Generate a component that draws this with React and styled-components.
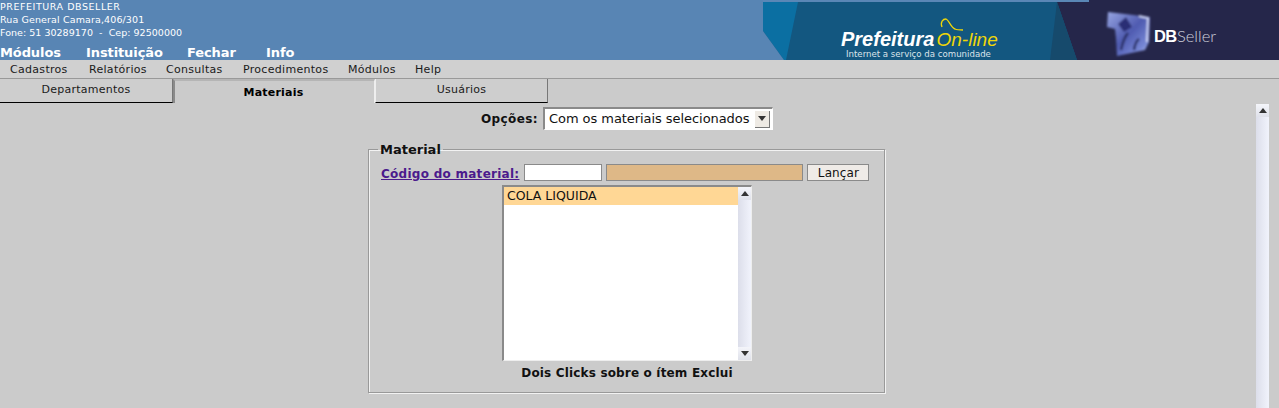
import React from 'react';
import styled, { createGlobalStyle } from 'styled-components';

const menuItems = [
  { label: 'Cadastros', width: 79 },
  { label: 'Relatórios', width: 77 },
  { label: 'Consultas', width: 77 },
  { label: 'Procedimentos', width: 105 },
  { label: 'Módulos', width: 67 },
  { label: 'Help' },
];

export default function App() {
  return (
    <>
      <GlobalStyle />
      <Header>
        <Company>
          <CompanyLines>
            <CompanyLine $spacing={0.55}>PREFEITURA DBSELLER</CompanyLine>
            <CompanyLine $spacing={0.12}>Rua General Camara,406/301</CompanyLine>
            <CompanyLine $spacing={0.03}>Fone: 51 30289170 &nbsp;-&nbsp; Cep: 92500000</CompanyLine>
          </CompanyLines>
          <TopMenu>
            <TopLink $width={86}>Módulos</TopLink>
            <TopLink $width={101}>Instituição</TopLink>
            <TopLink $width={79}>Fechar</TopLink>
            <TopLink>Info</TopLink>
          </TopMenu>
        </Company>
        <Banner />
      </Header>
      <MenuBar>
        {menuItems.map(item => (
          <MenuItem key={item.label} $width={item.width}>
            {item.label}
          </MenuItem>
        ))}
      </MenuBar>
      <Tabs>
        <FirstTab $width={173}>Departamentos</FirstTab>
        <ActiveTab>Materiais</ActiveTab>
        <Tab $width={173}>Usuários</Tab>
      </Tabs>
      <Page>
        <Content>
          <OptionsRow>
            <OptionsLabel>Opções:</OptionsLabel>
            <SelectBox>
              <SelectText>Com os materiais selecionados</SelectText>
              <SelectArrow>
                <Arrow $down />
              </SelectArrow>
            </SelectBox>
          </OptionsRow>
          <Fieldset>
            <Legend>Material</Legend>
            <CodeRow>
              <CodeLink href="#">Código do material:</CodeLink>
              <CodeInput />
              <NameInput />
              <Button>Lançar</Button>
            </CodeRow>
            <ListBox>
              <ListRows>
                <ListItem>COLA LIQUIDA</ListItem>
              </ListRows>
              <ListScroll>
                <ScrollButton>
                  <Arrow />
                </ScrollButton>
                <ScrollTrack />
                <ScrollButton>
                  <Arrow $down />
                </ScrollButton>
              </ListScroll>
            </ListBox>
            <Hint>Dois Clicks sobre o ítem Exclui</Hint>
          </Fieldset>
        </Content>
        <PageScroll>
          <ScrollButton>
            <Arrow />
          </ScrollButton>
          <ScrollTrack />
        </PageScroll>
      </Page>
    </>
  );
}

function Banner() {
  return (
    <BannerSvg viewBox="0 0 516 60" width="516" height="60">
      <defs>
        <linearGradient id="cube" x1="0" y1="0" x2="1" y2="1">
          <stop offset="0" stopColor="#98a6e2" />
          <stop offset="0.5" stopColor="#4f5bb0" />
          <stop offset="0.8" stopColor="#7686d4" />
          <stop offset="1" stopColor="#b4c2ee" />
        </linearGradient>
        <filter id="soft">
          <feGaussianBlur stdDeviation="0.8" />
        </filter>
      </defs>
      <rect width="516" height="60" fill="#135780" />
      <rect width="326" height="2" fill="#5a87b6" />
      <polygon points="0,2 35,2 23,60 21,60 0,31" fill="#0b6fa2" />
      <polygon points="0,31 21,60 0,60" fill="#5885b4" />
      <polygon points="294,2 326,2 326,0 516,0 516,60 314,60" fill="#25264a" />
      <polygon points="294,2 287,60 314,60" fill="#164a6c" />
      <text x="78" y="46" fill="#fff" fontFamily="'Liberation Sans', sans-serif" fontSize="20" fontStyle="italic" fontWeight="700">Prefeitura</text>
      <text x="173.5" y="46" fill="#efd608" fontFamily="'Liberation Sans', sans-serif" fontSize="19" fontStyle="italic">On-line</text>
      <path d="M179 27c-2-5 1-8 4-8 3 1 5 9 9 10 2 1 5 1 8 1" fill="none" stroke="#efd608" strokeWidth="1.3" />
      <text x="83" y="57" fill="#dbe4ea" fontFamily="'DejaVu Sans', sans-serif" fontSize="8.6">Internet a serviço da comunidade</text>
      <g filter="url(#soft)">
        <polygon points="345,12 387,17 386,42 382,50 354,56 353,38 352,29 344,27" fill="url(#cube)" />
        <polygon points="355,24 363,17 369,27 361,32" fill="#2b2f74" />
        <path d="M358 50c2-9 4-14 7-17M371 50c1-6 2-9 5-11" fill="none" stroke="#2c3068" strokeWidth="2.5" />
        <path d="M376 16l9 2-1 24" fill="none" stroke="#cfd6f4" strokeWidth="2" />
      </g>
      <text x="391" y="42" fill="#fff" fontFamily="'Liberation Sans', sans-serif" fontSize="16.5" fontWeight="700" letterSpacing="-0.6">DB</text>
      <text x="414" y="42" fill="#cfd1dc" fontFamily="Lato, sans-serif" fontSize="16.5" fontWeight="300">Seller</text>
    </BannerSvg>
  );
}

const GlobalStyle = createGlobalStyle`
  html, body {
    margin: 0;
    height: 408px;
    overflow: hidden;
    background: #cbcbcb;
    color: #000;
    font-family: 'DejaVu Sans', Verdana, sans-serif;
  }
`;

const Header = styled.header`
  display: flex;
  justify-content: space-between;
  height: 60px;
  background: #5885b4;
  overflow: hidden;
`;

const Company = styled.div`
  display: flex;
  flex-direction: column;
  color: #fff;
`;

const CompanyLines = styled.div`
  font-size: 9.5px;
  line-height: 13px;
  height: 46px;
`;

const CompanyLine = styled.div`
  letter-spacing: ${p => p.$spacing}px;
`;

const TopMenu = styled.nav`
  display: flex;
  font-size: 13px;
  font-weight: 700;
  line-height: 15px;
  letter-spacing: -0.1px;
  padding-top: 1px;
`;

const TopLink = styled.span`
  width: ${p => (p.$width ? `${p.$width}px` : 'auto')};
`;

const BannerSvg = styled.svg`
  display: block;
  flex: none;
`;

const MenuBar = styled.nav`
  display: flex;
  height: 18px;
  padding-left: 10px;
  background: #d0d0d0;
  border-bottom: 1px solid #999;
  font-size: 11px;
  line-height: 19px;
  letter-spacing: 0.3px;
  color: #1a1a1a;
`;

const MenuItem = styled.span`
  width: ${p => (p.$width ? `${p.$width}px` : 'auto')};
`;

const Tabs = styled.div`
  display: flex;
  height: 24px;
`;

const Tab = styled.div`
  box-sizing: border-box;
  width: ${p => p.$width}px;
  height: 24px;
  text-align: center;
  font-size: 11px;
  line-height: 22px;
  letter-spacing: 0.25px;
  background: #cecece;
  color: #1a1a1a;
  border-bottom: 1px solid #000;
  border-right: 1px solid #777;
  border-left: 1px solid #eee;
`;

const FirstTab = styled(Tab)`
  border-left: none;
`;

const ActiveTab = styled.div`
  box-sizing: border-box;
  width: 202px;
  height: 24px;
  padding: 1px 2px 0 0;
  text-align: center;
  font-size: 11px;
  font-weight: 700;
  line-height: 21px;
  letter-spacing: 0.2px;
  background: #cbcbcb;
  border-top: 2px solid #b5b5b5;
  border-left: 2px solid #8a8a8a;
  border-right: 1px solid #eee;
`;

const Page = styled.main`
  display: flex;
  height: 305px;
  overflow: hidden;
`;

const Content = styled.div`
  flex: 1;
  display: flex;
  flex-direction: column;
  align-items: center;
`;

const OptionsRow = styled.div`
  display: flex;
  align-items: center;
  gap: 5px;
  height: 23px;
  margin: 4px 0 19px -2px;
`;

const OptionsLabel = styled.span`
  font-size: 12px;
  font-weight: 700;
  letter-spacing: 0.4px;
  color: #111;
`;

const SelectBox = styled.div`
  box-sizing: border-box;
  display: flex;
  align-items: center;
  justify-content: space-between;
  width: 230px;
  height: 23px;
  padding: 0 2px 0 4px;
  background: #fff;
  border: 1px solid #fff;
  border-top: 2px solid #8a8a8a;
  border-left: 2px solid #8a8a8a;
  font-size: 13px;
  letter-spacing: -0.06px;
  color: #111;
  white-space: nowrap;
`;

const SelectText = styled.span`
  margin-top: -2px;
`;

const SelectArrow = styled.span`
  display: flex;
  align-items: center;
  justify-content: center;
  width: 14px;
  height: 16px;
  background: #eeeae4;
  border-right: 1px solid #777;
  border-bottom: 1px solid #777;
`;

const Arrow = styled.span`
  width: 0;
  height: 0;
  border-left: 4px solid transparent;
  border-right: 4px solid transparent;
  ${p => (p.$down ? 'border-top: 5px solid #333;' : 'border-bottom: 5px solid #333;')}
`;

const Fieldset = styled.fieldset`
  box-sizing: border-box;
  display: flex;
  flex-direction: column;
  align-items: center;
  width: 518px;
  height: 253px;
  margin: -8px 0 0 -2px;
  padding: 0 10px;
  border: 1px solid #f2f2f2;
  border-top-color: #999;
  border-left-color: #999;
  border-radius: 0;
  box-shadow: inset -1px -1px 0 #999, inset 1px 1px 0 #f2f2f2;
`;

const Legend = styled.legend`
  margin-left: -1px;
  padding: 1px 2px 0;
  font-size: 13px;
  font-weight: 700;
  line-height: 15px;
  color: #111;
`;

const CodeRow = styled.div`
  display: flex;
  align-items: center;
  align-self: flex-start;
  height: 17px;
  margin: 7px 0 4px 2px;
`;

const CodeLink = styled.a`
  margin-right: 5px;
  padding-top: 2px;
  font-size: 12px;
  font-weight: 700;
  letter-spacing: 0.27px;
  color: #4b1a8c;
`;

const CodeInput = styled.input`
  box-sizing: border-box;
  width: 78px;
  height: 17px;
  margin: 0 4px 0 0;
  padding: 0;
  background: #fff;
  border: 1px solid #8a8a8a;
`;

const NameInput = styled.div`
  box-sizing: border-box;
  width: 197px;
  height: 17px;
  margin-right: 4px;
  background: #deb887;
  border: 1px solid #8a8a8a;
`;

const Button = styled.button`
  box-sizing: border-box;
  width: 62px;
  height: 17px;
  padding: 0;
  background: #efebe7;
  border: 1px solid #8a8a8a;
  font-family: inherit;
  font-size: 12px;
  line-height: 14px;
  letter-spacing: 0.1px;
  color: #111;
`;

const ListBox = styled.div`
  box-sizing: border-box;
  display: flex;
  width: 250px;
  height: 176px;
  background: #fff;
  border-top: 2px solid #8a8a8a;
  border-left: 2px solid #8a8a8a;
  border-right: 1px solid #eee;
  border-bottom: 1px solid #eee;
`;

const ListRows = styled.div`
  flex: 1;
`;

const ListItem = styled.div`
  height: 18px;
  padding-left: 3px;
  background: #ffd795;
  font-size: 12.5px;
  line-height: 18px;
  color: #111;
`;

const ListScroll = styled.div`
  display: flex;
  flex-direction: column;
  width: 13px;
`;

const PageScroll = styled(ListScroll)`
  flex: none;
  width: 13px;
  margin: 1px 10px 0 0;
`;

const ScrollButton = styled.div`
  flex: none;
  display: flex;
  align-items: center;
  justify-content: center;
  height: 13px;
  background: linear-gradient(#f4f5fa, #dfe1ea);
`;

const ScrollTrack = styled.div`
  flex: 1;
  background: linear-gradient(90deg, #dcdeea, #f1f3fc);
`;

const Hint = styled.div`
  margin-top: 5px;
  font-size: 12px;
  font-weight: 700;
  line-height: 15px;
  letter-spacing: 0.17px;
  color: #111;
`;
